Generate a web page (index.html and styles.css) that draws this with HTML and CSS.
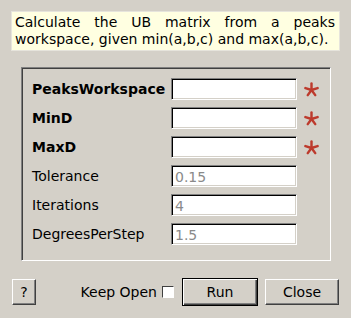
FILE: index.html
```html
<!DOCTYPE html>
<html lang="en">
<head>
    <meta charset="UTF-8">
    <title>FindUBUsingMinMaxCell</title>
    <link rel="stylesheet" href="styles.css">
</head>
<body>
    <div class="dialog">
        <p class="description">Calculate the UB matrix from a peaks workspace, given min(a,b,c) and max(a,b,c).</p>

        <div class="frame">
            <label class="prop required" for="ws">PeaksWorkspace</label>
            <input class="field" id="ws" type="text">
            <svg class="star" viewBox="0 0 16 16"><g stroke="#bd3a2c" stroke-width="2.6" stroke-linecap="round"><line x1="8" y1="8.5" x2="8" y2="1.5"/><line x1="8" y1="8.5" x2="14.5" y2="6.5"/><line x1="8" y1="8.5" x2="12" y2="14"/><line x1="8" y1="8.5" x2="4" y2="14"/><line x1="8" y1="8.5" x2="1.5" y2="6.5"/></g></svg>

            <label class="prop required" for="mind">MinD</label>
            <input class="field" id="mind" type="text">
            <svg class="star" viewBox="0 0 16 16"><g stroke="#bd3a2c" stroke-width="2.6" stroke-linecap="round"><line x1="8" y1="8.5" x2="8" y2="1.5"/><line x1="8" y1="8.5" x2="14.5" y2="6.5"/><line x1="8" y1="8.5" x2="12" y2="14"/><line x1="8" y1="8.5" x2="4" y2="14"/><line x1="8" y1="8.5" x2="1.5" y2="6.5"/></g></svg>

            <label class="prop required" for="maxd">MaxD</label>
            <input class="field" id="maxd" type="text">
            <svg class="star" viewBox="0 0 16 16"><g stroke="#bd3a2c" stroke-width="2.6" stroke-linecap="round"><line x1="8" y1="8.5" x2="8" y2="1.5"/><line x1="8" y1="8.5" x2="14.5" y2="6.5"/><line x1="8" y1="8.5" x2="12" y2="14"/><line x1="8" y1="8.5" x2="4" y2="14"/><line x1="8" y1="8.5" x2="1.5" y2="6.5"/></g></svg>

            <label class="prop" for="tol">Tolerance</label>
            <input class="field" id="tol" type="text" placeholder="0.15">
            <span></span>

            <label class="prop" for="iter">Iterations</label>
            <input class="field" id="iter" type="text" placeholder="4">
            <span></span>

            <label class="prop" for="deg">DegreesPerStep</label>
            <input class="field" id="deg" type="text" placeholder="1.5">
            <span></span>
        </div>

        <div class="footer">
            <button class="btn help">?</button>
            <label class="keep">Keep Open <span class="check"></span></label>
            <button class="btn run">Run</button>
            <button class="btn close">Close</button>
        </div>
    </div>
</body>
</html>
```

FILE: styles.css
```css
body {
    margin: 0;
    background-color: #d4d0c8;
    font-family: "DejaVu Sans", sans-serif;
    font-size: 14px;
    color: #000;
}

.dialog {
    width: 351px;
    height: 318px;
    padding: 11px 0 0 11px;
    box-sizing: border-box;
}

.description {
    margin: 0;
    width: 329px;
    box-sizing: border-box;
    padding: 2px 4px 2px 3px;
    line-height: 17px;
    text-align: justify;
    background-color: #ffffe1;
    border: 1px solid #e6e4dc;
}

.frame {
    margin: 16px 0 0 10px;
    width: 310px;
    height: 194px;
    box-sizing: border-box;
    padding: 10px 0 0 10px;
    border: 1px solid;
    border-color: #808080 #ffffff #ffffff #808080;
    box-shadow: inset 1px 1px 0 #404040;
    display: grid;
    grid-template-columns: 135px 126px 23px;
    grid-auto-rows: 22px;
    column-gap: 4px;
    row-gap: 7px;
    align-items: center;
}

.prop {
    white-space: nowrap;
}

.required {
    font-weight: bold;
}

.field {
    width: 126px;
    height: 22px;
    box-sizing: border-box;
    margin: 0;
    padding: 1px 0 0 3px;
    font-family: "DejaVu Sans", sans-serif;
    font-size: 14px;
    background-color: #fff;
    border: 1px solid;
    border-color: #808080 #ffffff #ffffff #808080;
    box-shadow: inset 1px 1px 0 #000, inset -1px -1px 0 #d4d0c8;
    outline: none;
}

.field::placeholder {
    color: #8a8a8a;
}

.star {
    width: 15px;
    height: 15px;
    margin-left: 3px;
}

.footer {
    display: flex;
    align-items: center;
    margin-top: 17px;
    width: 328px;
}

.btn {
    font-family: "DejaVu Sans", sans-serif;
    font-size: 14px;
    color: #000;
    background-color: #d4d0c8;
    height: 26px;
    padding: 0;
    border: 1px solid;
    border-color: #ffffff #404040 #404040 #ffffff;
    box-shadow: inset -1px -1px 0 #808080;
}

.help {
    width: 24px;
    margin-left: 1px;
}

.keep {
    margin-left: auto;
    display: flex;
    align-items: center;
    gap: 5px;
}

.check {
    width: 12px;
    height: 12px;
    box-sizing: border-box;
    background-color: #fff;
    border: 1px solid;
    border-color: #404040 #ffffff #ffffff #404040;
    box-shadow: 1px 1px 0 #d4d0c8;
}

.run {
    width: 76px;
    height: 28px;
    margin-left: 8px;
    border: 1px solid #000;
    box-shadow: inset 1px 1px 0 #fff, inset -1px -1px 0 #404040, inset -2px -2px 0 #808080;
}

.close {
    width: 74px;
    margin-left: 7px;
}
```
